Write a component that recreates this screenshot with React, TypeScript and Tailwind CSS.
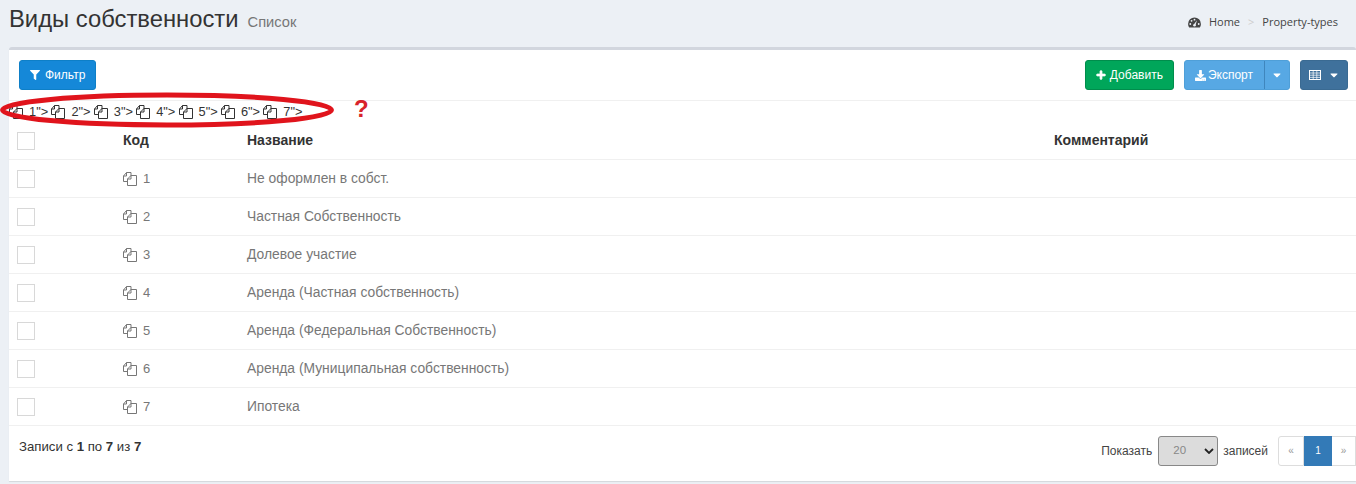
import { FaDownload, FaFilter, FaPlus, FaCaretDown } from 'react-icons/fa';

const rows = [
  { id: 1, name: 'Не оформлен в собст.' },
  { id: 2, name: 'Частная Собственность' },
  { id: 3, name: 'Долевое участие' },
  { id: 4, name: 'Аренда (Частная собственность)' },
  { id: 5, name: 'Аренда (Федеральная Собственность)' },
  { id: 6, name: 'Аренда (Муниципальная собственность)' },
  { id: 7, name: 'Ипотека' },
];

function CopyIcon({ className }: { className?: string }) {
  return (
    <svg viewBox="0 0 14 14" fill="none" stroke="currentColor" strokeWidth="1" className={className} aria-hidden>
      <path d="M4.5 9.5H0.5V4L3.5 0.5H8V4" />
      <path d="M3.5 0.5V4H0.5" />
      <path d="M4.5 13.5V7L8 3.5H13.5V13.5Z" />
      <path d="M8 3.5V7H4.5" />
    </svg>
  );
}

function DashboardIcon({ className }: { className?: string }) {
  return (
    <svg viewBox="0 0 14 12" className={className} aria-hidden>
      <path d="M7 0.5A7 7 0 0 0 0 7.5C0 9 .5 10.4 1.2 11.5H12.8C13.5 10.4 14 9 14 7.5A7 7 0 0 0 7 0.5Z" fill="#444" />
      <circle cx="2.4" cy="7.6" r="1" fill="#ecf0f5" />
      <circle cx="3.8" cy="4.2" r="1" fill="#ecf0f5" />
      <circle cx="7" cy="2.9" r="1" fill="#ecf0f5" />
      <circle cx="11.6" cy="7.6" r="1" fill="#ecf0f5" />
      <path d="M6 8.4L9.8 3.6L8 9Z" fill="#ecf0f5" />
      <circle cx="7" cy="9" r="1.4" fill="#ecf0f5" />
    </svg>
  );
}

function GridIcon({ className }: { className?: string }) {
  return (
    <svg viewBox="0 0 12 10" fill="none" stroke="currentColor" className={className} aria-hidden>
      <rect x="0.5" y="0.5" width="11" height="9" strokeWidth="1" />
      <path d="M0 3H12M0 5.2H12M0 7.4H12M4.2 0V10M7.8 0V10" strokeWidth="0.7" />
    </svg>
  );
}

function Checkbox() {
  return <div className="h-[18px] w-[18px] border border-[#d8d8d8] bg-white" />;
}

export default function App() {
  return (
    <div className="h-[484px] w-[1356px] overflow-hidden bg-[#ecf0f5] font-['Liberation_Sans',sans-serif] text-[#333]">
      <header className="flex h-[47px] items-start justify-between pl-[9px] pr-[18px]">
        <div className="flex items-baseline pt-[3px]">
          <h1 className="text-[23.8px] leading-[32px] text-[#333]">Виды собственности</h1>
          <span className="ml-[9px] text-[14.7px] text-[#777]">Список</span>
        </div>
        <div className="flex items-center pt-[14px] font-['Open_Sans',sans-serif] text-[11px] leading-[16px] text-[#444]">
          <DashboardIcon className="mr-[8px] h-[11px] w-[13px]" />
          <span>Home</span>
          <span className="mx-2 text-[#ccc]">&gt;</span>
          <span>Property-types</span>
        </div>
      </header>

      <main className="relative ml-[9px] h-[434px] w-[1347px] rounded-t-[3px] border-t-[3px] border-[#d2d6de] bg-white shadow-[0_1px_1px_rgba(0,0,0,0.1)]">
        <div className="flex h-[51px] items-start justify-between border-b border-[#f0f0f0] pt-[10px] pl-[10px] pr-[8px]">
          <button className="flex h-[30px] items-center gap-[5px] rounded-[3px] border border-[#0e7fc7] bg-[#1588d8] px-[10px] text-[12px] text-white">
            <FaFilter className="h-[10px] w-[10px]" />
            Фильтр
          </button>
          <div className="flex">
            <button className="flex h-[30px] items-center gap-[4px] rounded-[3px] border border-[#008d4c] bg-[#00a65a] px-[10px] text-[12px] text-white">
              <FaPlus className="h-[10px] w-[10px] stroke-[40]" />
              Добавить
            </button>
            <div className="ml-[10px] flex h-[30px] rounded-[3px] border border-[#4f9fd8] bg-[#57a8e4] text-[12px] text-white">
              <button className="flex items-center gap-[2px] border-r border-[#3f86bd] pl-[10px] pr-[11px]">
                <FaDownload className="h-[11px] w-[11px]" />
                Экспорт
              </button>
              <button className="flex w-[24px] items-center justify-center">
                <FaCaretDown className="h-[12px] w-[12px]" />
              </button>
            </div>
            <button className="ml-[10px] flex h-[30px] w-[48px] items-center justify-center gap-[7px] rounded-[3px] border border-[#3a6a92] bg-[#3f719c] text-white">
              <GridIcon className="h-[10px] w-[12px]" />
              <FaCaretDown className="h-[12px] w-[12px]" />
            </button>
          </div>
        </div>

        <div className="flex h-[21px] items-center text-[12.8px] whitespace-nowrap text-[#333]">
          {rows.map((r) => (
            <span key={r.id} className="flex w-[42.4px] shrink-0 items-center">
              <CopyIcon className="h-[14px] w-[14px] shrink-0 text-[#333]" />
              <span className="ml-[6px]">{r.id}"&gt;</span>
            </span>
          ))}
        </div>

        <table className="w-full table-fixed border-collapse text-[14px]">
          <colgroup>
            <col className="w-[106px]" />
            <col className="w-[124px]" />
            <col className="w-[807px]" />
            <col />
          </colgroup>
          <thead>
            <tr className="h-[37px] border-b border-[#f0f0f0] text-left font-bold">
              <th className="px-2 pt-[2px] font-bold"><Checkbox /></th>
              <th className="px-2 font-bold">Код</th>
              <th className="px-2 font-bold">Название</th>
              <th className="px-2 font-bold">Комментарий</th>
            </tr>
          </thead>
          <tbody className="text-[#777]">
            {rows.map((r) => (
              <tr key={r.id} className="h-[38px] border-b border-[#f0f0f0]">
                <td className="px-2 pt-[2px]"><Checkbox /></td>
                <td className="px-2">
                  <span className="mt-[1px] flex items-center gap-[6px] text-[13px]">
                    <CopyIcon className="h-[14px] w-[14px]" />
                    {r.id}
                  </span>
                </td>
                <td className="px-2 text-[13.85px]">{r.name}</td>
                <td className="px-2" />
              </tr>
            ))}
          </tbody>
        </table>

        <div className="flex items-start justify-between pl-[10px]">
          <div className="pt-[12px] text-[13.2px] leading-[18px] text-[#333]">
            Записи с <b>1</b> по <b>7</b> из <b>7</b>
          </div>
          <div className="flex items-center pt-[10px] text-[12px] text-[#444]">
            <span>Показать</span>
            <div className="relative ml-[6px] h-[30px] w-[60px]">
              <select defaultValue="20" className="h-full w-full appearance-none rounded-[3px] border border-[#888] bg-[#dcdcdc] pl-[14px] text-[11.5px] text-[#888]">
                <option>20</option>
              </select>
              <svg viewBox="0 0 10 6" fill="none" stroke="#222" strokeWidth="1.8" className="pointer-events-none absolute top-[12px] right-[4px] h-[6px] w-[10px]" aria-hidden>
                <path d="M1 1L5 5L9 1" />
              </svg>
            </div>
            <span className="ml-[5px]">записей</span>
            <div className="ml-[10px] flex h-[30px] w-[78px] text-[10px]">
              <span className="flex w-[26px] items-center justify-center rounded-l-[3px] border border-[#ddd] text-[#999]">«</span>
              <span className="flex w-[28px] items-center justify-center border border-[#337ab7] bg-[#337ab7] text-white">1</span>
              <span className="flex w-[24px] items-center justify-center border border-l-0 border-[#ddd] text-[#999]">»</span>
            </div>
          </div>
        </div>

        <svg className="pointer-events-none absolute top-[42px] -left-[9px]" width="340" height="40" viewBox="0 0 340 40" fill="none" aria-hidden>
          <ellipse cx="167" cy="18" rx="164.5" ry="15" stroke="#e0141c" strokeWidth="5" />
        </svg>
        <span className="absolute top-[47px] left-[345px] text-[24px] leading-[24px] font-bold text-[#d8232a]">?</span>
      </main>
    </div>
  );
}
